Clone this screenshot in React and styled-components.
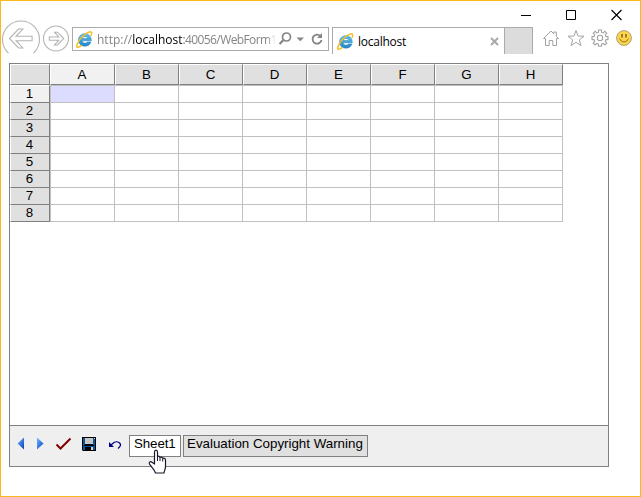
import React from "react";
import styled, { createGlobalStyle } from "styled-components";

const Global = createGlobalStyle`
  *, *::before, *::after { box-sizing: border-box; }
  body { margin: 0; background: #fff; overflow: hidden; }
  svg { display: block; flex: none; }
`;

const Window = styled.div`
  width: 641px;
  height: 497px;
  border: 1px solid #fcba19;
  background: #fff;
  display: flex;
  flex-direction: column;
  font-family: "Liberation Sans", Arial, sans-serif;
`;

const TitleBar = styled.div`
  height: 26px;
  display: flex;
  justify-content: flex-end;
  align-items: flex-start;
  padding: 8px 18px 0 0;
  gap: 34px;
  flex: none;
`;

const BrowserBar = styled.div`
  height: 27px;
  display: flex;
  align-items: flex-start;
  flex: none;
`;

const NavButtons = styled.div`
  width: 71px;
  height: 34px;
  margin-top: -7px;
  flex: none;
`;

const AddressBar = styled.div`
  width: 257px;
  height: 24px;
  border: 1px solid #ababab;
  display: flex;
  align-items: center;
  padding-left: 3px;
  flex: none;
`;

const Url = styled.div`
  width: 182px;
  margin-left: 4px;
  padding-top: 2px;
  white-space: nowrap;
  font: 12px/20px "Open Sans", "Noto Sans", sans-serif;
  color: #858585;
  mask-image: linear-gradient(to right, #000 170px, transparent 179px);
  b { font-weight: 400; color: #000; }
`;

const UrlPath = styled.span`
  letter-spacing: -0.6px;
`;

const Tab = styled.div`
  width: 172px;
  height: 27px;
  margin-left: 3px;
  border: solid #ababab;
  border-width: 1px 0 0 1px;
  display: flex;
  align-items: center;
  padding: 1px 5px 0 4px;
  flex: none;
`;

const TabTitle = styled.div`
  flex: 1;
  margin-left: 4px;
  padding-top: 1px;
  font: 12px/20px "Open Sans", "Noto Sans", sans-serif;
  letter-spacing: -0.25px;
  color: #000;
`;

const NewTab = styled.div`
  width: 29px;
  height: 27px;
  background: #dcdcdc;
  border: 1px solid #ababab;
  border-bottom: 0;
  flex: none;
`;

const Tools = styled.div`
  display: flex;
  align-items: center;
  gap: 6.7px;
  margin: 2px 0 0 9px;
`;

const Panel = styled.div`
  width: 600px;
  height: 404px;
  margin: 9px 0 0 8px;
  border: 1px solid #808080;
  display: flex;
  flex-direction: column;
`;

const Grid = styled.div`
  flex: 1;
  display: grid;
  grid-template-columns: 40px 65px repeat(7, 64px);
  grid-template-rows: 21px 18px repeat(7, 17px);
`;

const Head = styled.div`
  display: flex;
  align-items: center;
  justify-content: center;
  padding: 0 1px ${(p) => (p.$row ? "1px" : "0")} 0;
  background: ${(p) => (p.$active ? "#f1f1f1" : "#e0e0e0")};
  border-right: 1px solid #808080;
  border-bottom: 1px solid #808080;
  border-top: ${(p) => (p.$row && !p.$active ? "0" : "1px solid #fff")};
  border-left: 1px solid #fff;
  font-size: 13.33px;
  line-height: 15px;
  color: #000;
`;

const Cell = styled.div`
  border: solid #c0c0c0;
  border-width: ${(p) => (p.$top ? "1px" : "0")} 1px 1px ${(p) => (p.$left ? "1px" : "0")};
  background: ${(p) => (p.$selected ? "#dcdcff" : "#fff")};
`;

const Footer = styled.div`
  height: 41px;
  border-top: 1px solid #808080;
  background: #efefef;
  display: flex;
  align-items: flex-start;
  padding-top: 9px;
`;

const FooterIcons = styled.div`
  width: 119px;
  height: 22px;
  flex: none;
`;

const SheetTab = styled.div`
  position: relative;
  width: ${(p) => p.$width};
  height: 22px;
  margin-right: 2px;
  padding-left: ${(p) => (p.$active ? "4px" : "3px")};
  border: 1px solid #808080;
  background: ${(p) => (p.$active ? "#fff" : "#e0e0e0")};
  font-size: 13.33px;
  line-height: 16px;
  letter-spacing: ${(p) => p.$spacing};
  white-space: nowrap;
  color: #000;
`;

const Cursor = styled.svg`
  position: absolute;
  left: 18px;
  top: 13px;
`;

const Explorer = ({ id }) => (
  <svg width="17" height="17" viewBox="0 0 17 17">
    <defs>
      <linearGradient id={id} x1="0" y1="0" x2="0" y2="1">
        <stop offset="0" stopColor="#62c3ee" />
        <stop offset="1" stopColor="#1e85c7" />
      </linearGradient>
    </defs>
    <path
      d="M15.3 9.8H6.2c.2 1.5 1.3 2.3 2.7 2.3 1 0 1.9-.4 2.4-1.2h3.7c-.8 2.7-3.2 4.3-6.1 4.3-3.8 0-6.4-2.6-6.4-6.2 0-3.7 2.7-6.3 6.4-6.3 4 0 6.5 2.8 6.4 7.1zM11.7 7.5C11.500 6.200 10.500 5.500 9 5.500S6.500 6.200 6.200 7.500z"
      fill={`url(#${id})`}
      stroke="#2b83ba"
      strokeWidth=".5"
    />
    <path
      d="M2.700 10.500C.8 13.400.1 15.700 1.200 16.200c.9.400 2.600-.4 4.300-1.800M2 11.500C4 7.200 9.500 2 13.400 1c2.700-.7 2.700 1.400 1.500 4"
      fill="none"
      stroke="#f4be27"
      strokeWidth="1.500"
    />
  </svg>
);

const COLUMNS = ["A", "B", "C", "D", "E", "F", "G", "H"];
const ROWS = [1, 2, 3, 4, 5, 6, 7, 8];

export default function App() {
  return (
    <>
      <Global />
      <Window>
        <TitleBar>
          <svg width="11" height="12"><path d="M0 6.500h10" stroke="#000" /></svg>
          <svg width="11" height="12"><path d="M.5 1.500h9v9h-9z" fill="none" stroke="#000" /></svg>
          <svg width="11" height="12"><path d="M.5 1l10 10M10.500 1l-10 10" stroke="#000" strokeWidth="1.150" /></svg>
        </TitleBar>
        <BrowserBar>
          <NavButtons>
            <svg width="71" height="34" fill="none" stroke="#b4b4b4" strokeWidth="1.100">
              <path d="M7.500 33.200A18.500 18.500 0 1 1 32.500 33.200" />
              <path d="M8.500 18.500L17.500 9h4.300l-6.700 7.300h16v4.400h-16l6.700 7.300h-4.300z" />
              <circle cx="55" cy="18.500" r="12.500" />
              <path d="M62.700 18.500L56.500 12.200h-3l4.300 4.800h-9.500v3.200h9.500l-4.300 4.800h3z" />
            </svg>
          </NavButtons>
          <AddressBar>
            <Explorer id="ie-address" />
            <Url>
              http://<b>localhost</b><UrlPath>:40056/WebForm1</UrlPath>
            </Url>
            <svg width="48" height="18" fill="none" stroke="#848484">
              <circle cx="7.500" cy="7" r="4" strokeWidth="1.700" />
              <path d="M4.500 10L.5 14" strokeWidth="2.200" />
              <path d="M17.500 7.500h7.500l-3.750 3.800z" fill="#848484" stroke="none" />
              <path d="M41.300 6A4.500 4.500 0 1 0 42.500 10" strokeWidth="1.800" />
              <path d="M43 3v5h-5z" fill="#848484" stroke="none" />
            </svg>
          </AddressBar>
          <Tab>
            <Explorer id="ie-tab" />
            <TabTitle>localhost</TabTitle>
            <svg width="9" height="9"><path d="M1 1l7 7M8 1l-7 7" stroke="#a8a8a8" strokeWidth="2" /></svg>
          </Tab>
          <NewTab />
          <Tools>
            <svg width="18" height="18" fill="none" stroke="#a3a3a3">
              <path d="M1.500 9.500L9 2l2.800 2.800V3h2.500v4.300l2.200 2.200h-2v7h-3.700v-5H7.200v5H3.500v-7z" />
            </svg>
            <svg width="18" height="18" fill="none" stroke="#a3a3a3">
              <path d="M9 1.500l2 5.500 6 .2-4.700 3.700 1.700 5.700-5-3.300-5 3.300 1.700-5.700L1 7.200l6-.2z" />
            </svg>
            <svg width="18" height="18" fill="none" stroke="#a3a3a3" strokeWidth="1.100">
              <path d="M7.500 1h3v2.200l1.700.7 1.600-1.600 2 2-1.500 1.600.7 1.700h2v3h-2l-.7 1.700 1.500 1.600-2 2-1.600-1.500-1.700.7v2.100h-3v-2.100l-1.700-.7-1.600 1.500-2-2 1.500-1.600-.7-1.700H1v-3h2l.7-1.700-1.500-1.600 2-2 1.600 1.600 1.700-.7z" />
              <circle cx="9" cy="9" r="2.700" />
            </svg>
            <svg width="17" height="18">
              <circle cx="8" cy="9" r="7.400" fill="#fcd54b" stroke="#aaa27e" />
              <path d="M6 5v3.500M10 5v3.500" stroke="#785f27" strokeWidth="1.500" />
              <path d="M3.500 9.500q1.200 3.500 4.500 3.500t4.500-3.500" fill="none" stroke="#9b7425" />
            </svg>
          </Tools>
        </BrowserBar>
        <Panel>
          <Grid>
            <Head />
            {COLUMNS.map((name) => (
              <Head key={name} $active={name === "A"}>{name}</Head>
            ))}
            {ROWS.map((row) => (
              <React.Fragment key={row}>
                <Head $row $active={row === 1}>{row}</Head>
                {COLUMNS.map((name) => (
                  <Cell
                    key={name}
                    $top={row === 1}
                    $left={name === "A"}
                    $selected={row === 1 && name === "A"}
                  />
                ))}
              </React.Fragment>
            ))}
          </Grid>
          <Footer>
            <FooterIcons>
              <svg width="119" height="22">
                <defs>
                  <linearGradient id="arrow" x1="0" y1="0" x2="1" y2="1">
                    <stop offset="0" stopColor="#83b8fa" />
                    <stop offset=".5" stopColor="#367be5" />
                    <stop offset="1" stopColor="#153d9b" />
                  </linearGradient>
                </defs>
                <path d="M14 2.500v12L7.500 8.500z" fill="url(#arrow)" />
                <path d="M27 2.500v12l6.500-6z" fill="url(#arrow)" />
                <path d="M46.500 9.500l4 4L60.500 3.500" fill="none" stroke="#800000" strokeWidth="2" />
                <path d="M72 2h14v14H73l-1-1z" fill="#000" />
                <path d="M73 3h2v7h8V3h2v12H73z" fill="#07569a" />
                <path d="M75 3h8v6h-8z" fill="#c6c6c6" />
                <path d="M74 10h10v1H74zM75 12h8v4h-8z" fill="#000" />
                <path d="M81 12h2v3h-2zM84 3h1v1h-1z" fill="#d5d5d5" />
                <path d="M99 7v5h5z" fill="#000080" />
                <path d="M101 10l3-2.500q2.500-1.500 5 0t1 4l-2 2" fill="none" stroke="#000080" strokeWidth="1.200" />
              </svg>
            </FooterIcons>
            <SheetTab $active $width="52px" $spacing="-0.1px">
              Sheet1
              <Cursor width="20" height="26">
                <path
                  d="M6.500 15V3.200C6.500.5 9.500.5 9.500 3.200v4.300q1-.8 2.500.8 1.800-.7 2.600.9 2.900-.4 2.900 2.300v6c0 2.500-1 3.500-1.500 6.500H7.500C6.500 20.500 3 17.500 1.500 15c-.8-1.600.8-3.200 2.500-1.700z"
                  fill="#fff"
                  stroke="#17172b"
                  strokeWidth="1.200"
                  strokeLinejoin="round"
                />
                <path d="M9.500 7v5M12 8.500V12M14.700 9.500V12.500" stroke="#17172b" />
              </Cursor>
            </SheetTab>
            <SheetTab $width="185px" $spacing="0">Evaluation Copyright Warning</SheetTab>
          </Footer>
        </Panel>
      </Window>
    </>
  );
}
